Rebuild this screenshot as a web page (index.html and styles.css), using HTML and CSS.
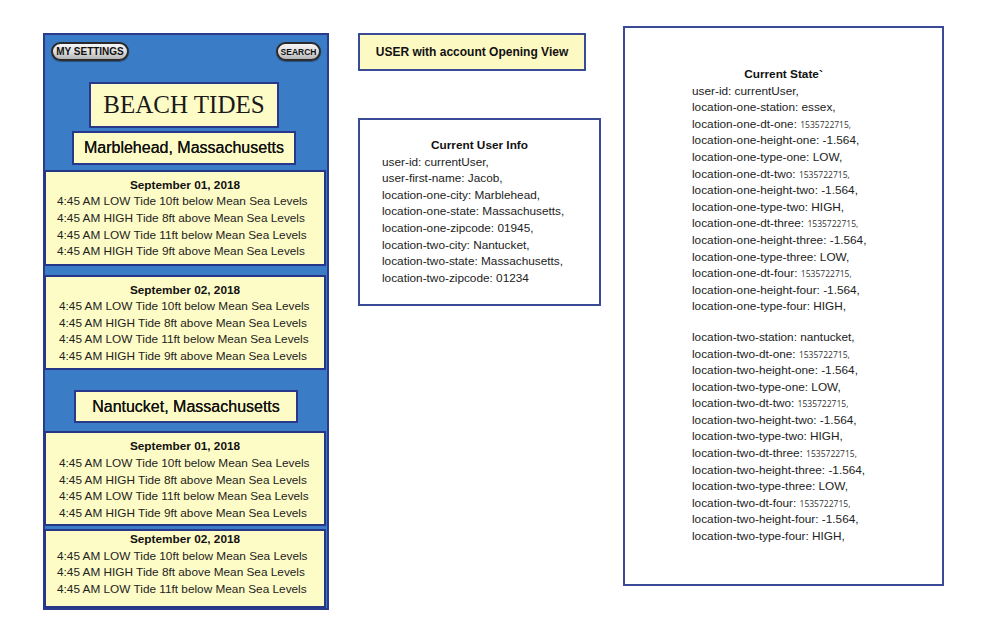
FILE: index.html
```html
<!DOCTYPE html>
<html lang="en">
<head>
<meta charset="utf-8">
<title>Beach Tides</title>
<link rel="stylesheet" href="styles.css">
</head>
<body>
<div class="page">
  <div class="phone">
    <div class="topbar">
      <span class="pill pill-lg">MY SETTINGS</span>
      <span class="pill pill-sm">SEARCH</span>
    </div>
    <div class="brand">BEACH TIDES</div>
    <div class="place place-one">Marblehead, Massachusetts</div>
    <div class="card card-a">
      <div class="date">September 01, 2018</div>
      <div class="row">4:45 AM LOW Tide 10ft below Mean Sea Levels</div>
      <div class="row">4:45 AM HIGH Tide 8ft above Mean Sea Levels</div>
      <div class="row">4:45 AM LOW Tide 11ft below Mean Sea Levels</div>
      <div class="row">4:45 AM HIGH Tide 9ft above Mean Sea Levels</div>
    </div>
    <div class="card card-b">
      <div class="date">September 02, 2018</div>
      <div class="row">4:45 AM LOW Tide 10ft below Mean Sea Levels</div>
      <div class="row">4:45 AM HIGH Tide 8ft above Mean Sea Levels</div>
      <div class="row">4:45 AM LOW Tide 11ft below Mean Sea Levels</div>
      <div class="row">4:45 AM HIGH Tide 9ft above Mean Sea Levels</div>
    </div>
    <div class="place place-two">Nantucket, Massachusetts</div>
    <div class="card card-c">
      <div class="date">September 01, 2018</div>
      <div class="row">4:45 AM LOW Tide 10ft below Mean Sea Levels</div>
      <div class="row">4:45 AM HIGH Tide 8ft above Mean Sea Levels</div>
      <div class="row">4:45 AM LOW Tide 11ft below Mean Sea Levels</div>
      <div class="row">4:45 AM HIGH Tide 9ft above Mean Sea Levels</div>
    </div>
    <div class="card card-d">
      <div class="date">September 02, 2018</div>
      <div class="row">4:45 AM LOW Tide 10ft below Mean Sea Levels</div>
      <div class="row">4:45 AM HIGH Tide 8ft above Mean Sea Levels</div>
      <div class="row">4:45 AM LOW Tide 11ft below Mean Sea Levels</div>
    </div>
  </div>

  <div class="middle">
    <div class="label-box">USER with account Opening View</div>
    <div class="info-box">
      <div class="box-title">Current User Info</div>
      <div class="line">user-id: currentUser,</div>
      <div class="line">user-first-name: Jacob,</div>
      <div class="line">location-one-city: Marblehead,</div>
      <div class="line">location-one-state: Massachusetts,</div>
      <div class="line">location-one-zipcode: 01945,</div>
      <div class="line">location-two-city: Nantucket,</div>
      <div class="line">location-two-state: Massachusetts,</div>
      <div class="line">location-two-zipcode: 01234</div>
    </div>
  </div>

  <div class="state-box">
    <div class="box-title">Current State`</div>
    <div class="group">
      <div class="line">user-id: currentUser,</div>
      <div class="line">location-one-station: essex,</div>
      <div class="line">location-one-dt-one: <span class="num">1535722715,</span></div>
      <div class="line">location-one-height-one: -1.564,</div>
      <div class="line">location-one-type-one: LOW,</div>
      <div class="line">location-one-dt-two: <span class="num">1535722715,</span></div>
      <div class="line">location-one-height-two: -1.564,</div>
      <div class="line">location-one-type-two: HIGH,</div>
      <div class="line">location-one-dt-three: <span class="num">1535722715,</span></div>
      <div class="line">location-one-height-three: -1.564,</div>
      <div class="line">location-one-type-three: LOW,</div>
      <div class="line">location-one-dt-four: <span class="num">1535722715,</span></div>
      <div class="line">location-one-height-four: -1.564,</div>
      <div class="line">location-one-type-four: HIGH,</div>
    </div>
    <div class="group group-two">
      <div class="line">location-two-station: nantucket,</div>
      <div class="line">location-two-dt-one: <span class="num">1535722715,</span></div>
      <div class="line">location-two-height-one: -1.564,</div>
      <div class="line">location-two-type-one: LOW,</div>
      <div class="line">location-two-dt-two: <span class="num">1535722715,</span></div>
      <div class="line">location-two-height-two: -1.564,</div>
      <div class="line">location-two-type-two: HIGH,</div>
      <div class="line">location-two-dt-three: <span class="num">1535722715,</span></div>
      <div class="line">location-two-height-three: -1.564,</div>
      <div class="line">location-two-type-three: LOW,</div>
      <div class="line">location-two-dt-four: <span class="num">1535722715,</span></div>
      <div class="line">location-two-height-four: -1.564,</div>
      <div class="line">location-two-type-four: HIGH,</div>
    </div>
  </div>
</div>
</body>
</html>
```

FILE: styles.css
```css
* { box-sizing: border-box; }

html, body {
  margin: 0;
  padding: 0;
  background: #ffffff;
}

body {
  font-family: "Liberation Sans", Arial, sans-serif;
  color: #1c1c1c;
  width: 988px;
  height: 626px;
  overflow: hidden;
}

.page {
  display: flex;
  align-items: flex-start;
}

/* ---------- phone mockup ---------- */
.phone {
  margin: 33px 0 0 43px;
  width: 286px;
  height: 577px;
  background: #3b7cc6;
  border: 2px solid #2a3b8c;
  padding: 7px 0 0 0;
  display: flex;
  flex-direction: column;
}

.topbar {
  display: flex;
  justify-content: space-between;
  align-items: center;
  padding: 0 6px;
  height: 19px;
}

.pill {
  display: flex;
  align-items: center;
  justify-content: center;
  height: 19px;
  border: 2px solid #2b2b2b;
  border-radius: 10px;
  background: linear-gradient(#f6f6f6 0%, #dcdcdc 55%, #b4b4b4 100%);
  font-weight: bold;
  color: #111;
  box-shadow: 0 1px 1px rgba(0,0,0,0.35);
}

.pill-lg {
  width: 78px;
  font-size: 10px;
}

.pill-sm {
  width: 45px;
  font-size: 8.5px;
}

.brand {
  margin: 21px 0 0 44px;
  width: 190px;
  height: 46px;
  background: #fefcc6;
  border: 2px solid #28398b;
  display: flex;
  align-items: center;
  justify-content: center;
  font-family: "Liberation Serif", "Times New Roman", serif;
  font-size: 25px;
  color: #1a1a1a;
}

.place {
  width: 224px;
  background: #fefcc6;
  border: 2px solid #28398b;
  display: flex;
  align-items: center;
  justify-content: center;
  font-size: 16px;
  color: #111;
  text-shadow: 0 0 0.4px #111;
}

.place-one {
  margin: 3px 0 0 27px;
  height: 34px;
}

.place-two {
  margin: 20px 0 0 29px;
  height: 33px;
}

.card {
  width: 282px;
  margin-left: -1px;
  background: #fefcc6;
  border: 2px solid #26378a;
  padding: 5px 0 0 11px;
  font-size: 11.8px;
  line-height: 16.6px;
}

.card-a { margin-top: 5px; height: 96px; }
.card-b { margin-top: 9px; height: 96px; padding-left: 13px; }
.card-c { margin-top: 8px; height: 95px; padding-left: 13px; }
.card-d { margin-top: 3px; height: 79px; padding-top: 0; }

.date {
  font-weight: bold;
  text-align: center;
  margin-left: -11px;
  color: #111;
}

.card-b .date,
.card-c .date { margin-left: -13px; }

.row {
  white-space: nowrap;
  color: #222;
}

/* ---------- middle column ---------- */
.middle {
  margin: 33px 0 0 29px;
  display: flex;
  flex-direction: column;
}

.label-box {
  width: 228px;
  height: 38px;
  background: #fdf9c3;
  border: 2px solid #3b4a96;
  display: flex;
  align-items: center;
  justify-content: center;
  font-size: 12px;
  font-weight: bold;
  color: #111;
}

.info-box {
  margin-top: 47px;
  width: 243px;
  height: 188px;
  border: 2px solid #3b4a96;
  padding: 17px 0 0 22px;
  font-size: 11.8px;
  line-height: 16.6px;
}

.box-title {
  font-weight: bold;
  text-align: center;
  color: #111;
}

.info-box .box-title { margin-left: -22px; }

.line {
  height: 16.6px;
  white-space: nowrap;
  color: #222;
}

/* ---------- state box ---------- */
.state-box {
  margin: 26px 0 0 22px;
  width: 321px;
  height: 560px;
  border: 2px solid #3b4a96;
  padding: 38px 0 0 67px;
  font-size: 11.8px;
  line-height: 16.6px;
}

.state-box .box-title { margin-left: -67px; }

.group-two { margin-top: 14px; }

.num {
  font-family: "Open Sans", "DejaVu Sans", sans-serif;
  font-size: 8.5px;
  line-height: 1;
  color: #333;
}
```
